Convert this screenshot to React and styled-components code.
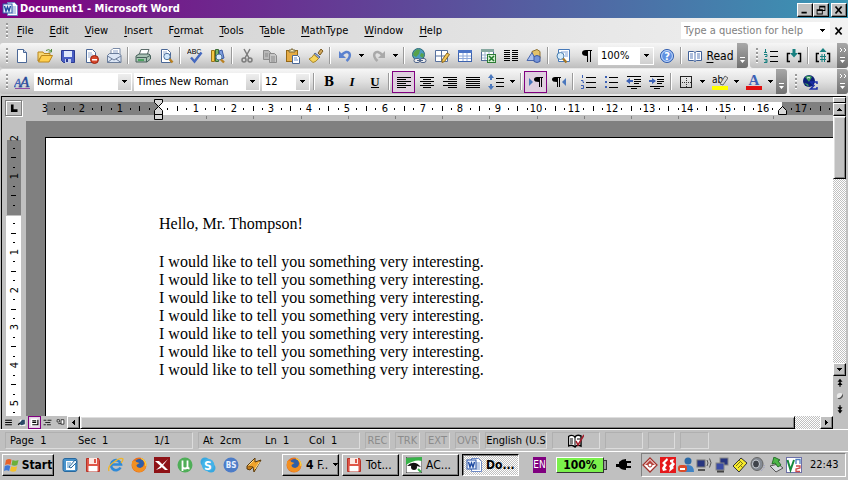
import React from 'react';
import styled, { createGlobalStyle } from 'styled-components';

const GlobalStyle = createGlobalStyle`
    * {
        box-sizing: border-box;
    }

    body {
        margin: 0;
        background: #c0c0c0;
        color: #000;
        font-family: 'DejaVu Sans Condensed', 'DejaVu Sans', sans-serif;
        font-size: 11px;
    }

    button, input, select {
        font: inherit;
        color: inherit;
        margin: 0;
        padding: 0;
        border: 0;
        border-radius: 0;
        background: none;
    }

    u {
        text-underline-offset: 2px;
    }
`

const Window = styled.div`
    display: flex;
    flex-direction: column;
    min-height: 100vh;
    overflow: hidden;
`

/* ---------- title bar ---------- */

const TitleBar = styled.header`
    display: flex;
    align-items: center;
    height: 18px;
    padding: 0 1px 0 2px;
    gap: 2px;
    background: linear-gradient(90deg, #800080 0%, #3a96b4 100%);
`

const Title = styled.h1`
    flex: 1;
    margin: 0;
    color: #fff;
    font-size: 11px;
    line-height: 18px;
    font-weight: bold;
    white-space: nowrap;
`

const CaptionButtons = styled.div`
    display: flex;
    margin-top: 1px;
`

const CaptionButton = styled.button`
    display: flex;
    align-items: center;
    justify-content: center;
    width: 16px;
    height: 14px;
    margin-left: ${p => (p.$apart ? '2px' : '0')};
    background: #c0c0c0;
    border: 1px solid;
    border-color: #fff #000 #000 #fff;
    box-shadow: inset -1px -1px #808080;
`

/* ---------- menus and toolbars ---------- */

const Docks = styled.div`
    display: flex;
    flex-direction: column;
    height: 78px;
    background: linear-gradient(90deg, #cecece 0%, #f2f2f2 100%);
`

const MenuBar = styled.nav`
    display: flex;
    align-items: center;
    height: 25px;
    padding-left: 6px;
`

const MenuItem = styled.button`
    height: 20px;
    padding: 0 8px;
    white-space: nowrap;
`

const Spacer = styled.div`
    flex: 1;
`

const AskBox = styled.label`
    display: flex;
    align-items: center;
    width: 149px;
    height: 17px;
    padding-right: 4px;
    background: #fff;
`

const AskInput = styled.input`
    flex: 1;
    min-width: 0;
    padding-left: 3px;
    outline: 0;

    &::placeholder {
        color: #808080;
        opacity: 1;
    }
`

const MenuClose = styled.button`
    display: flex;
    align-items: center;
    justify-content: center;
    width: 18px;
    height: 18px;
`

const ToolRow = styled.div`
    display: flex;
    height: 26px;
    gap: 2px;
`

const Strip = styled.div`
    display: flex;
    align-items: center;
    flex: ${p => (p.$grow ? '1' : 'none')};
    height: 25px;
    padding-left: 6px;
    border-radius: 3px;
    background: linear-gradient(180deg, #f6f6f6 0%, #e0e0e0 50%, #bebebe 100%);
`

const Grip = styled.i`
    width: 2px;
    height: 16px;
    margin-right: ${p => (p.$tight ? '1px' : '2px')};
    background: repeating-linear-gradient(180deg, #999 0 2px, #fff 2px 3px, transparent 3px 4px);
`

const Tool = styled.button`
    display: flex;
    align-items: center;
    justify-content: center;
    gap: 3px;
    flex: none;
    width: ${p => (p.$wide ? '53px' : '23px')};
    height: 22px;
    font-size: ${p => (p.$wide ? '12px' : 'inherit')};
    border: 1px solid ${p => (p.$on ? '#800080' : 'transparent')};
    background: ${p => (p.$on ? '#dfcfdf' : 'none')};
`

const DropButton = styled.button`
    display: flex;
    align-items: center;
    justify-content: center;
    flex: none;
    width: 11px;
    height: 22px;
`

const Divider = styled.i`
    flex: none;
    width: 2px;
    height: 17px;
    margin: 0 2px;
    border-left: 1px solid #9a9a9a;
    border-right: 1px solid #fff;
`

const Combo = styled.label`
    display: flex;
    align-items: center;
    flex: none;
    width: ${p => p.$width}px;
    height: 18px;
    margin: 0 1px;
    background: #fff;
`

const ComboSelect = styled.select`
    appearance: none;
    flex: 1;
    min-width: 0;
    height: 18px;
    padding-left: 3px;
    outline: 0;
`

const ComboArrow = styled.span`
    display: flex;
    align-items: center;
    justify-content: center;
    width: 13px;
    height: 16px;
    margin-right: 1px;
    background: linear-gradient(180deg, #eee, #cfcfcf);
`

const Overflow = styled.button`
    display: flex;
    flex-direction: column;
    align-items: center;
    justify-content: ${p => (p.$more ? 'space-between' : 'flex-end')};
    width: 11px;
    height: 25px;
    padding: 5px 0 4px;
    margin-left: ${p => (p.$push ? 'auto' : '0')};
    border-radius: 0 3px 3px 0;
    background: linear-gradient(180deg, #a8a8a8, #707070);
`

/* ---------- workspace ---------- */

const Workspace = styled.main`
    display: flex;
    flex: 1;
    margin: 0 2px 0 1px;
    border-top: 1px solid #000;
    border-left: 1px solid #000;
    background: #c0c0c0;
`

const Editor = styled.section`
    display: flex;
    flex-direction: column;
    flex: 1;
    min-width: 0;
`

const RulerRow = styled.div`
    display: flex;
    height: 24px;
`

const TabSelector = styled.button`
    display: flex;
    align-items: center;
    justify-content: center;
    flex: none;
    width: 17px;
    height: 16px;
    margin: 3px 12px 0 3px;
    border: 1px solid #808080;
    box-shadow: inset 1px 1px #fff, 1px 1px #fff;
`

const HorizontalScale = styled.svg`
    flex: 1;
    min-width: 0;
    height: 24px;
`

const EditorBody = styled.div`
    display: flex;
    flex: 1;
    min-height: 295px;
`

const VerticalScale = styled.svg`
    flex: none;
    width: 24px;
    height: 295px;
`

const Canvas = styled.div`
    display: flex;
    flex: 1;
    min-width: 0;
    padding: 16px 0 0 19px;
    background: #808080;
`

const Page = styled.article`
    flex: 1;
    min-width: 0;
    padding: 77px 20px 0 113px;
    border-top: 1px solid #000;
    border-left: 1px solid #000;
    background: #fff;
    font-family: 'Liberation Serif', serif;
    font-size: 16px;
    line-height: 18px;
`

const Paragraph = styled.p`
    margin: 0;

    &:empty {
        height: 20px;
    }
`

const checker = 'repeating-conic-gradient(#c0c0c0 0 25%, #fff 0 50%) 0 0 / 2px 2px'

const ViewBar = styled.div`
    display: flex;
    align-items: center;
    height: 13px;
`

const ViewButton = styled.button`
    display: flex;
    align-items: center;
    justify-content: center;
    width: 13px;
    height: 13px;
    border: 1px solid ${p => (p.$on ? '#800080' : 'transparent')};
    background: ${p => (p.$on ? '#e3cfe3' : 'none')};
`

const ScrollButton = styled.button`
    display: flex;
    align-items: center;
    justify-content: center;
    flex: none;
    width: 13px;
    height: 13px;
    background: #c0c0c0;
    border: 1px solid;
    border-color: #fff #000 #000 #fff;
    box-shadow: inset -1px -1px #808080;
`

const HorizontalTrack = styled.div`
    flex: 1;
    height: 13px;
    padding-right: 25px;
    background: ${checker};
`

const Thumb = styled.div`
    height: ${p => p.$height || 13}px;
    background: #c0c0c0;
    border: 1px solid;
    border-color: #fff #000 #000 #fff;
    box-shadow: inset 1px 1px #dedede, inset -1px -1px #808080;
`

const ScrollColumn = styled.aside`
    display: flex;
    flex-direction: column;
    flex: none;
    width: 13px;
`

const SplitBox = styled.div`
    height: 6px;
    border: 1px solid;
    border-color: #fff #000 #000 #fff;
`

const VerticalTrack = styled.div`
    flex: 1;
    background: ${checker};
`

const BrowseButtons = styled.div`
    display: flex;
    flex-direction: column;
    height: 53px;
`

/* ---------- status bar ---------- */

const StatusBar = styled.footer`
    display: flex;
    align-items: center;
    gap: 5px;
    height: 22px;
    padding: 0 5px;
    border-top: 1px solid #fff;
    white-space: nowrap;
`

const StatusGroup = styled.div`
    display: grid;
    grid-template-columns: ${p => p.$columns};
    align-items: center;
    flex: none;
    height: 17px;
    padding-left: ${p => (p.$flush ? '0' : '4px')};
    justify-items: ${p => (p.$flush ? 'center' : 'start')};
    color: ${p => (p.$dim ? '#8c8c8c' : '#000')};
    border: 1px solid;
    border-color: #b0b0b0 #dcdcdc #dcdcdc #b0b0b0;
`

/* ---------- task bar ---------- */

const TaskBar = styled.footer`
    display: flex;
    align-items: center;
    height: 29px;
    padding: 0 2px 3px;
    border-top: 1px solid #fff;
    white-space: nowrap;
`

const StartButton = styled.button`
    display: flex;
    align-items: center;
    justify-content: center;
    gap: 2px;
    width: 52px;
    height: 22px;
    font-size: 12px;
    font-weight: bold;
    border: 1px solid;
    border-color: #fff #000 #000 #fff;
    box-shadow: inset -1px -1px #808080;
`

const QuickLaunch = styled.div`
    display: flex;
    margin: 0 17px 0 4px;
`

const LaunchButton = styled.button`
    display: flex;
    align-items: center;
    justify-content: center;
    width: 23px;
    height: 22px;
`

const Tasks = styled.div`
    display: flex;
    gap: 3px;
`

const Task = styled.button`
    display: flex;
    align-items: center;
    gap: 4px;
    width: 57px;
    height: 22px;
    padding-left: 3px;
    overflow: hidden;
    font-size: 12px;
    font-weight: ${p => (p.$active ? 'bold' : 'normal')};
    background: ${p => (p.$active ? checker : '#c0c0c0')};
    border: 1px solid;
    border-color: ${p => (p.$active ? '#000 #fff #fff #000' : '#fff #000 #000 #fff')};
    box-shadow: ${p => (p.$active ? 'inset 1px 1px #808080' : 'inset -1px -1px #808080')};
`

const Language = styled.button`
    width: 13px;
    height: 16px;
    margin: 0 10px 0 14px;
    background: #800080;
    color: #fff;
    font-size: 10px;
    line-height: 16px;
`

const Battery = styled.div`
    width: 48px;
    height: 16px;
    border: 1px solid;
    border-color: #fff #333 #333 #fff;
    background: #7bf04c;
    font-size: 12px;
    font-weight: bold;
    line-height: 14px;
    text-align: center;
`

const BatteryTip = styled.i`
    width: 3px;
    height: 10px;
    border: 1px solid #333;
    border-left: 0;
    background: #999;
`

const Plug = styled.div`
    display: flex;
    margin-left: 9px;
`

const Tray = styled.div`
    display: flex;
    align-items: center;
    width: 205px;
    height: 24px;
    margin-left: auto;
    border: 1px solid;
    border-color: #808080 #fff #fff #808080;
`

const TrayIcons = styled.div`
    display: flex;
    gap: 2px;
`

const Clock = styled.time`
    margin-left: 8px;
`

const Svg = styled.svg`
    flex: none;
    display: block;
`

/* ---------- icons, all on a 16px grid ---------- */

const sheet = (
    <path d="M3.5 1.5h6l3 3v10h-9z" fill="#fff" stroke="#4a6796" />
)

const bars = (rows, color = '#000') => rows.map(([x, y, w]) => (
    <rect key={`${x}-${y}`} x={x} y={y} width={w} height="1" fill={color} />
))

const icons = {
    word: <>
        <path d="M5.500 1.500h7l3 3v10h-10z" fill="#fff" stroke="#6d88c4" />
        <path d="M10 6h4M10 8h4M10 10h4M10 12h4" stroke="#7d9ad0" />
        <rect x="1" y="3" width="9" height="9" fill="#e8effc" stroke="#2c56a8" />
        <path d="M2.500 5l1.500 5 1.500-4 1.500 4 1.500-5" fill="none" stroke="#1f4aa0" strokeWidth="1.400" />
    </>,
    min: <rect x="4" y="10" width="6" height="2" />,
    restore: <path d="M6 3h7v6h-3v4H3V7h3zM7 5v2h3v1h2V5zM4 9v3h5V9z" fillRule="evenodd" />,
    close: <path d="M4 4l7 8M11 4l-7 8" stroke="#000" strokeWidth="2" />,
    fresh: <>
        {sheet}
        <path d="M9.500 1.500v3h3" fill="#c9d8f0" stroke="#4a6796" />
    </>,
    open: <>
        <path d="M1 4h5l1 1.500h6v3H4L1 13z" fill="#f7d774" stroke="#b9861c" />
        <path d="M1.500 14L4.500 7.500h11L12 14z" fill="#ffcf4e" stroke="#b9861c" />
        <path d="M9 2.500q3-2 5 .5M14.500 1v3h-3" fill="none" stroke="#4f8a3c" />
    </>,
    save: <>
        <path d="M1.500 2.500h13v12h-11l-2-2z" fill="#4a5fc4" stroke="#2b3a91" />
        <rect x="4" y="3" width="8" height="6" fill="#dfe8fb" />
        <rect x="5" y="11" width="6" height="4" fill="#c5cfee" />
        <rect x="6" y="11" width="2" height="3" fill="#2b3a91" />
    </>,
    permission: <>
        {sheet}
        <path d="M5 5h4M5 7h5M5 9h3" stroke="#9bb0d4" />
        <circle cx="11.500" cy="11.500" r="4" fill="#d8472b" stroke="#962512" />
        <rect x="9" y="11" width="5" height="1.500" fill="#fff" />
    </>,
    mail: <>
        <path d="M5 8V2.500L7 .500h7v9" fill="#fff" stroke="#7a8ba8" />
        <path d="M7 3h5M7 5h5" stroke="#8ca2c8" />
        <path d="M1.500 7.500l2-2H13l2 2v7h-13.500z" fill="#dce6f5" stroke="#6a7c9a" />
        <path d="M1.500 8l6.500 4 7-4M1.500 14.500L6 11M15 14.500L10 11" fill="none" stroke="#6a7c9a" />
    </>,
    print: <>
        <path d="M4 7l2-5.500h8L12 7z" fill="#fff" stroke="#5c6b6a" />
        <path d="M1 8l3-2h10l1.500 1.500V11L12 14H1z" fill="#a9c1b4" stroke="#46605a" />
        <path d="M1.500 9.500h10l3.500-2M11.500 9.500V14" fill="none" stroke="#46605a" />
        <path d="M3 12h6" stroke="#2f9b46" strokeWidth="1.500" />
    </>,
    preview: <>
        {sheet}
        <path d="M5 4h4M5 6h2" stroke="#9bb0d4" />
        <circle cx="9" cy="8.500" r="3.200" fill="#cfe6fb" stroke="#50729c" />
        <path d="M11.500 11l3 3.500" stroke="#b98022" strokeWidth="2.500" />
    </>,
    spelling: <>
        <text x="0" y="6" fontSize="7" fontFamily="Liberation Sans, sans-serif">ABC</text>
        <path d="M4 9.500l3.500 4L14.500 4.500" fill="none" stroke="#4569bf" strokeWidth="2.400" />
    </>,
    research: <>
        <path d="M1.500 2.500h3v11h-3z" fill="#f3c745" stroke="#9b741a" />
        <path d="M5.500 1.500h3v12h-3z" fill="#7db56b" stroke="#3a6b34" />
        <path d="M9 3l3-1 2 8-3 1z" fill="#7f9fe0" stroke="#3a58a4" />
        <circle cx="9" cy="9" r="3" fill="#d9edff" stroke="#50729c" />
        <path d="M11 11.500l3 3" stroke="#b98022" strokeWidth="2.400" />
    </>,
    cut: <>
        <path d="M5 1l5 9M11 1L6 10" stroke="#7c7c7c" strokeWidth="1.500" />
        <circle cx="5" cy="12" r="2" fill="none" stroke="#7c7c7c" strokeWidth="1.500" />
        <circle cx="11" cy="12" r="2" fill="none" stroke="#7c7c7c" strokeWidth="1.500" />
    </>,
    copy: <>
        <path d="M1.500 2.500h5l2 2v7h-7z" fill="#b8b8b8" stroke="#8b8b8b" />
        <path d="M7.500 5.500h5l2 2v7h-7z" fill="#c6c6c6" stroke="#8b8b8b" />
        <path d="M9 9h4M9 11h4M9 13h4M3 6h3M3 8h3" stroke="#8b8b8b" />
    </>,
    paste: <>
        <rect x="1.500" y="2.500" width="11" height="11" fill="#e5ab45" stroke="#956816" />
        <path d="M4 4V2h2l1-1.500L8 2h2v2z" fill="#f3e7b9" stroke="#7b6a3a" />
        <path d="M7.500 7.500h5l2 2v6h-7z" fill="#fff" stroke="#4a6796" />
        <path d="M9 10h3M9 12h4" stroke="#6a8ed0" />
    </>,
    brush: <>
        <path d="M10 5l3-4 2 2-3 4z" fill="#d2a85c" stroke="#7d5c20" />
        <path d="M7 5l5 4-1.500 1.500L6 6.500z" fill="#8fa6d0" stroke="#4f6798" />
        <path d="M6 6.500l4.500 4Q8 14 5 14.500L1 11Q4 10 6 6.500z" fill="#f6d45c" stroke="#a98525" />
    </>,
    undo: <>
        <path d="M4 7.500Q10 1.500 12.500 5.500 14 9 9.500 13" fill="none" stroke="#5b82cf" strokeWidth="2.500" />
        <path d="M2 3v7h7z" fill="#5b82cf" />
    </>,
    redo: <>
        <path d="M12 7.500Q6 1.500 3.500 5.500 2 9 6.500 13" fill="none" stroke="#a9a9a9" strokeWidth="2.500" />
        <path d="M14 3v7H7z" fill="#a9a9a9" />
    </>,
    link: <>
        <circle cx="7.500" cy="6.500" r="6" fill="#4c9bbf" stroke="#2c6a78" />
        <path d="M3 4q3-4 6-2l-1 4-3 3-3-2zM10 5l3 1-1 4-3-2z" fill="#57a24b" />
        <rect x="3" y="10.500" width="6" height="4" rx="2" fill="#eee" stroke="#50658c" />
        <rect x="9" y="10.500" width="6" height="4" rx="2" fill="#eee" stroke="#50658c" />
        <path d="M6 12.500h6" stroke="#50658c" />
    </>,
    borders: <>
        <path d="M1.500 2.500h12v11h-12zM1.500 8h12M7.500 2.500v11" fill="#fff" stroke="#56709e" />
        <path d="M8 12l5-7 2.500 1.500-5 7L8 14.500z" fill="#f1c75a" stroke="#8d6619" />
    </>,
    table: <>
        <rect x="1.500" y="2.500" width="13" height="11" fill="#fff" stroke="#3c62ae" />
        <rect x="1" y="2" width="14" height="3" fill="#4b74c6" />
        <path d="M2 8h12M2 10.500h12M6 5v8M10 5v8" stroke="#8faada" />
    </>,
    excel: <>
        <rect x="1.500" y="1.500" width="12" height="11" fill="#fff" stroke="#55709b" />
        <rect x="1" y="1" width="13" height="3" fill="#86a8a0" />
        <path d="M2 7h11M2 10h11M5 4v8M9 4v8" stroke="#9db2cd" />
        <rect x="7.500" y="6.500" width="8" height="8" fill="#d8f0d4" stroke="#2d7b34" />
        <path d="M9 8l5 5M14 8l-5 5" stroke="#1f7a2b" strokeWidth="1.600" />
    </>,
    columns: bars([2, 4, 6, 8, 10, 12].flatMap(y => [[1, y, 6], [9, y, 6]])),
    drawing: <>
        <path d="M6 3.500l5-2 3 2v7l-5 2-3-2z" fill="#e4c26a" stroke="#8d7030" />
        <path d="M1 12.500l5-8 4 8z" fill="#a9c0ef" stroke="#4967ac" />
        <path d="M8 8.500q3-2 6 0v5q-3 2-6 0z" fill="#7594d8" stroke="#3a58a4" />
    </>,
    docmap: <>
        <path d="M3.500 1.500h11v12h-11z" fill="#fff" stroke="#4679b9" />
        <path d="M6 4h7M10 6h3M10 8h3" stroke="#7ca0d8" />
        <circle cx="5.500" cy="8" r="3.500" fill="#d5ebfb" stroke="#487dae" />
        <path d="M8 10.500l3.500 4" stroke="#a87724" strokeWidth="2.400" />
    </>,
    pilcrow: <>
        <path d="M8 2h6v1h-1v11h-1V3h-2v11H9V8Q4 8 4 5t4-3z" />
    </>,
    help: <>
        <circle cx="8" cy="8" r="6.500" fill="#5f90e2" stroke="#2f5cae" />
        <circle cx="8" cy="8" r="5.400" fill="none" stroke="#c7dbfa" />
        <text x="8" y="12" fontSize="11" fontWeight="bold" fill="#fff" textAnchor="middle">?</text>
    </>,
    book: <>
        <path d="M1.500 3.500h5l1.500 1 1.500-1h5v9h-5l-1.500 1-1.500-1h-5z" fill="#fff" stroke="#3f5f97" />
        <path d="M8 4.500v9M3 6h3M3 8h3M3 10h3M10 6h3M10 8h3M10 10h3" stroke="#5b7cb8" />
    </>,
    outline: <>
        {bars([[7, 3, 8], [7, 8, 8], [7, 13, 8]])}
        <path d="M2.500 1v3M1 4.500h3M1 6.500h3v2H2M1 11.500h3v3H1M2 13h2" fill="none" stroke="#178080" />
    </>,
    insertRef: <>
        <path d="M4 5.500H1.500v8H4M12 5.500h2.500v8H12" fill="none" stroke="#000" strokeWidth="1.500" />
        <path d="M6.500 1h3v4h2.500L8 9.500 4 5h2.500z" fill="#178080" />
    </>,
    numberRef: <>
        <path d="M4 5.500H1.500v8H4M12 5.500h2.500v8H12" fill="none" stroke="#000" strokeWidth="1.500" />
        <path d="M8 0l3.500 4h-7z" fill="#178080" />
        <path d="M7 6v8M9.500 6v8M5 8.500h6M5 11.500h6" stroke="#178080" />
    </>,
    styles: <>
        <text x="0" y="13" fontSize="12" fontStyle="italic" fontFamily="Liberation Serif, serif" fill="#3c61b5" stroke="#3c61b5" strokeWidth=".4">A</text>
        <text x="6" y="13" fontSize="15" fontStyle="italic" fontFamily="Liberation Serif, serif" fill="#274a99" stroke="#274a99" strokeWidth=".4">A</text>
        <path d="M1 14.500h15" stroke="#8e4fa5" />
    </>,
    bold: <text x="8" y="12" fontSize="12" fontWeight="bold" textAnchor="middle" fontFamily="DejaVu Serif, serif">B</text>,
    italic: <text x="8" y="12" fontSize="13" fontWeight="bold" fontStyle="italic" textAnchor="middle" fontFamily="Liberation Serif, serif">I</text>,
    underline: <>
        <text x="8" y="12" fontSize="13" fontWeight="bold" textAnchor="middle" fontFamily="Liberation Serif, serif">U</text>
        <path d="M4 13.500h8" stroke="#000" />
    </>,
    left: bars([[1, 3, 14], [1, 5, 9], [1, 7, 14], [1, 9, 9], [1, 11, 14], [1, 13, 9]]),
    center: bars([[1, 3, 14], [4, 5, 8], [1, 7, 14], [4, 9, 8], [1, 11, 14], [4, 13, 8]]),
    right: bars([[1, 3, 14], [6, 5, 9], [1, 7, 14], [6, 9, 9], [1, 11, 14], [6, 13, 9]]),
    justify: bars([[1, 3, 14], [1, 5, 14], [1, 7, 14], [1, 9, 14], [1, 11, 14], [1, 13, 14]]),
    spacing: <>
        {bars([[8, 4, 8], [8, 8, 8], [8, 12, 8]])}
        <path d="M3 0l3 4H4v2H2V4H0zM3 16l3-4H4v-2H2v2H0z" fill="#4b78bd" />
    </>,
    ltr: <>
        <path d="M1 4l4 4-4 4z" fill="#4b78bd" />
        <path d="M9 3h6v1h-1v9h-1V4h-1v9h-1V8Q6 8 6 5.500T9 3z" />
    </>,
    rtl: <>
        <path d="M15 4l-4 4 4 4z" fill="#4b78bd" />
        <path d="M4 3h6v1H9v9H8V4H7v9H6V8Q1 8 1 5.500T4 3z" />
    </>,
    numbers: <>
        {bars([[6, 3, 10], [6, 8, 10], [6, 13, 10]])}
        <path d="M2.500 1v3M1 6.500h2v2h1M1 11.500h2.500v3H1" fill="none" stroke="#3c61b5" />
    </>,
    bullets: <>
        {bars([[6, 3, 9], [6, 8, 9], [6, 13, 9]])}
        <path d="M2 2h2v2H2zM2 7h2v2H2zM2 12h2v2H2z" fill="#3c61b5" />
    </>,
    outdent: <>
        {bars([[1, 2, 14], [8, 5, 7], [8, 7, 7], [8, 9, 5], [1, 12, 14], [5, 14, 6]])}
        <path d="M0 7l4-3v2h3v2H4v2z" fill="#3c61b5" />
    </>,
    indent: <>
        {bars([[1, 2, 14], [8, 5, 7], [8, 7, 7], [8, 9, 5], [1, 12, 14], [5, 14, 6]])}
        <path d="M7 7L3 4v2H0v2h3v2z" fill="#3c61b5" />
    </>,
    frame: <>
        <rect x="2.500" y="2.500" width="11" height="11" fill="none" stroke="#222" />
        <path d="M8.500 4v9M4 8.500h9" stroke="#333" strokeDasharray="1 1" />
    </>,
    highlight: <>
        <text x="0" y="9" fontSize="10">ab</text>
        <path d="M8 10l5-8 3 2-5 7z" fill="#ddd" stroke="#666" />
        <rect x="0" y="12" width="16" height="4" fill="#ff0" />
    </>,
    fontColor: <>
        <text x="8" y="11" fontSize="15" fontWeight="bold" textAnchor="middle" fontFamily="Liberation Serif, serif" fill="#3c61b5">A</text>
        <rect x="0" y="12" width="16" height="4" fill="#e01010" />
    </>,
    equation: <>
        <circle cx="7" cy="7" r="6" fill="#0c1e78" />
        <path d="M3 3q4-3 7 0L7 8zM2 9l4 1 1 3z" fill="#3b9a5c" />
        <path d="M5 4q2-1 3 0" stroke="#fff" fill="none" />
        <path d="M15 10V8H8.500l3.500 3.500L8.500 15H15v-2" fill="none" stroke="#1c2da8" strokeWidth="1.500" />
    </>,
    tab: <path d="M6 4v7h6" fill="none" stroke="#000" strokeWidth="3" />,
    viewNormal: <path d="M2 4h12M2 8h12M2 12h12" stroke="#000" strokeWidth="2" />,
    viewWeb: <>
        <path d="M5 3h10v11H5z" fill="#fff" />
        <path d="M3 10l6-7h5v8l-6 2z" fill="#2b4a68" />
        <path d="M2 12l3-3" stroke="#000" strokeWidth="2" />
    </>,
    viewPrint: <>
        <rect x="1" y="1" width="14" height="14" fill="#fff" />
        <path d="M4 5h7M4 8h7M4 12h10M14 3v10" stroke="#000" strokeWidth="2" />
    </>,
    viewOutline: <path d="M1 4h5M8 4h7M4 8h9M1 12h4M7 12h7" stroke="#222" strokeWidth="2" />,
    viewReading: <path d="M2 3h4v4H2zM9 3h5v8H9zM4 10h5" fill="#fff" stroke="#222" strokeWidth="1.500" />,
    prevPage: <path d="M8 1l4 5H9v1l3 4H9v3H7v-3H4l3-4V6H4z" />,
    ball: <>
        <circle cx="8" cy="8" r="5" fill="#e8e8e8" />
        <path d="M12 4q3 7-4 9-3 0-4-2 6 1 8-7z" fill="#555" />
    </>,
    nextPage: <path d="M8 15l4-5H9V9l3-4H9V2H7v3H4l3 4v1H4z" />,
    proof: <>
        <path d="M.500 3.500Q4 1 7 4q2-3 6-1v10q-4-2-6 1-3-3-6.500-1z" fill="#fff" stroke="#000" strokeWidth="1.400" />
        <path d="M7 4v10M2 6h3M2 8h3M2 10h3M9 6h3" stroke="#000" />
        <path d="M8 8l2 4 6-10" fill="none" stroke="#a31e2c" strokeWidth="1.600" />
    </>,
    windows: <>
        <path d="M2 3q3-2 5.500-.300L6.500 8Q4 6.500 1 8z" fill="#e8622a" />
        <path d="M8.500 3q3 1.500 6 0l-1.200 5q-2.800 1.500-5.800 0z" fill="#6bb03c" />
        <path d="M.800 9q3-1.500 5.500 0l-1.200 5Q2.500 12.500 0 14z" fill="#3f78d8" />
        <path d="M7.300 9.200q3 1.400 5.800 0L12 14q-3 1.500-6 0z" fill="#f3c02c" />
    </>,
    desktop: <>
        <rect x="1" y="1.500" width="14" height="13" rx="2" fill="#4793cc" stroke="#28679d" />
        <rect x="4" y="4" width="9" height="9" fill="#fff" />
        <path d="M5 6h4M5 8h3M5 10h4" stroke="#4793cc" />
        <path d="M7 10l6-7 2 2-6 6z" fill="#e9f4fc" stroke="#28679d" />
    </>,
    floppy: <>
        <path d="M1.500 1.500h12l1 2v11h-13z" fill="#df5648" stroke="#b63328" />
        <rect x="4" y="1" width="8" height="6" fill="#fbe9e4" />
        <rect x="3.500" y="9" width="9" height="5.500" fill="#fff" />
        <rect x="9" y="2" width="2" height="4" fill="#df5648" />
    </>,
    explorer: <>
        <path d="M12.500 10.500A5 5 0 1 1 13 7.500H4" fill="none" stroke="#2f8ad8" strokeWidth="2.600" />
        <path d="M1 14Q-1 10 6 5T15 2q0 2-2 4" fill="none" stroke="#efb52c" strokeWidth="1.400" />
    </>,
    firefox: <>
        <circle cx="8" cy="8" r="7.500" fill="#e7701d" />
        <circle cx="8.500" cy="6.500" r="4.500" fill="#2f5fa8" />
        <path d="M1 4q3-1 4.500 1l3 1-3 2q0 3 4 3 4-1 4.500-6Q17.500 12 10 15 2 15 1 9z" fill="#f29022" />
        <path d="M10 1.500q5 2 5 7.500" fill="none" stroke="#ffd33d" strokeWidth="1.300" />
    </>,
    crossApp: <>
        <rect width="16" height="16" fill="#8e1216" />
        <path d="M1 4h4l9 9h-3z" fill="#fff" />
        <path d="M14 2L2 13l5-2z" fill="#fff" />
    </>,
    torrent: <>
        <circle cx="8" cy="8" r="7.500" fill="#4fae58" />
        <path d="M5.500 3.500v6q0 2 2.500 2t2.500-2v-6M10.500 9.500q0 2 2 2M5.500 9v5" fill="none" stroke="#fff" strokeWidth="1.800" />
    </>,
    skype: <>
        <circle cx="5" cy="5" r="4.500" fill="#38a8e0" />
        <circle cx="11" cy="11" r="4.500" fill="#38a8e0" />
        <circle cx="8" cy="8" r="6.200" fill="#42b2e8" />
        <text x="8" y="12.500" fontSize="12" fontWeight="bold" fill="#fff" textAnchor="middle">S</text>
    </>,
    bs: <>
        <circle cx="8" cy="8" r="7.500" fill="#4c7cc7" />
        <text x="8" y="11" fontSize="8" fontWeight="bold" fill="#e8f0ff" textAnchor="middle">BS</text>
    </>,
    winamp: <>
        <path d="M1 9l8-8v4l6-2-7 12-1-5z" fill="#f0a42c" stroke="#5b3b0c" />
        <path d="M2.500 8.500l5-5M9 12l4.500-7" stroke="#fbe29b" />
        <path d="M1 9v3l3 1 3-3" fill="#c37a18" stroke="#5b3b0c" />
    </>,
    eye: <>
        <rect width="16" height="16" fill="#fff" stroke="#222" />
        <path d="M0 1l16-1v4Q9 2 0 8z" fill="#37b248" />
        <path d="M1 9q7-7 14 1Q8 8 1 9z" fill="#111" />
        <circle cx="8" cy="10" r="3" fill="#111" />
        <path d="M12 12l3 3" stroke="#37b248" strokeWidth="2" />
    </>,
    plug: <path d="M0 7h3V5q3-3 7-3v2h5v2h-4v3h4v2h-5v2Q5 13 3 10H0z" />,
    diamond: <>
        <path d="M8 1l7 7-7 7-7-7z" fill="#fff" stroke="#a3332d" strokeWidth="1.300" />
        <path d="M8 3l5 5H3z" fill="#c24a42" />
        <circle cx="8" cy="8" r="2" fill="#fff" stroke="#a3332d" />
    </>,
    bolt: <>
        <rect width="16" height="16" fill="#e5181b" />
        <path d="M7 1L2 6l2 2-2 3 1 3 4-1-2-2 2-3-2-2 3-3zM10 3l4-1-1 3 2 2-2 3 1 1-5 4 1-4-1-2 3-3-2-1z" fill="#fff" />
    </>,
    userBusy: <>
        <circle cx="10" cy="4" r="3.500" fill="#2c6aa6" />
        <path d="M3 15q1-7 7-7t6 7z" fill="#3f83c4" />
        <rect x="0" y="8" width="9" height="7" rx="3" fill="#dc4a28" />
        <rect x="2" y="11" width="5" height="2" fill="#fff" />
    </>,
    wireless: <>
        <rect x="1" y="3" width="8" height="7" fill="#27357f" stroke="#777" />
        <path d="M2 13h7" stroke="#555" strokeWidth="2" />
        <path d="M11 3q2 3 0 6M13.500 1.500q3 4 0 9" fill="none" stroke="#555" />
    </>,
    network: <>
        <rect x="6" y="1" width="8" height="7" fill="#27357f" stroke="#888" />
        <rect x="2" y="6" width="8" height="7" fill="#3b4ca5" stroke="#888" />
        <path d="M3 14.500h7" stroke="#444" strokeWidth="2" />
    </>,
    note: <>
        <path d="M1 9l8-8 6 5-8 9z" fill="#f5e92c" stroke="#333" />
        <path d="M4 9l5-5M6 11l5-5M8 8l3 3M7 3l3 3" stroke="#77701a" />
    </>,
    speaker: <>
        <ellipse cx="7" cy="7" rx="6" ry="6.500" fill="#858b94" stroke="#666" />
        <ellipse cx="6" cy="7" rx="3.500" ry="4" fill="#3f434a" stroke="#c8ccd2" />
        <path d="M14 8q1 4-4 6" fill="none" stroke="#8f93c0" strokeDasharray="1 1" />
    </>,
    remove: <>
        <path d="M2 9l8-2 5 4-7 4z" fill="#d8dbe0" stroke="#555" />
        <path d="M6 0l6 3-2 1 3 4-3 2-3-4-3 1z" fill="#4cb648" stroke="#27702a" />
    </>,
    vnc: <>
        <rect x=".500" y=".500" width="15" height="15" fill="#fff" stroke="#6d70a8" />
        <path d="M1.500 3L4.500 13 8 3" fill="none" stroke="#178a3c" strokeWidth="2" />
        <path d="M10 7V2.500h4V7" fill="none" stroke="#4f7fc0" strokeWidth="1.300" />
        <path d="M10 9h4v2l-4 1v2.500h4" fill="none" stroke="#cf4b4b" strokeWidth="1.300" />
    </>,
}

const Icon = ({ name, size = 16 }) => (
    <Svg width={size} height={size} viewBox="0 0 16 16" aria-hidden="true">{icons[name]}</Svg>
)

const turns = { down: 0, left: 90, up: 180, right: 270 }

const Arrow = ({ to = 'down' }) => (
    <Svg width="7" height="7" viewBox="0 0 7 7" shapeRendering="crispEdges" aria-hidden="true">
        <path d="M1 2h5v1H5v1H4v1H3V4H2V3H1z" transform={`rotate(${turns[to]} 3.5 3.5)`} />
    </Svg>
)

const Chevrons = () => (
    <Svg width="8" height="5" viewBox="0 0 8 5" aria-hidden="true">
        <path d="M1 0l2 2-2 2M5 0l2 2-2 2" fill="none" stroke="#fff" />
    </Svg>
)

const OverflowMark = () => (
    <Svg width="7" height="7" viewBox="0 0 7 7" aria-hidden="true">
        <path d="M1 0h5v1H1zM1 3h5L3.500 6z" fill="#fff" />
    </Svg>
)

const MoreButton = ({ more, push }) => (
    <Overflow $more={more} $push={push} aria-label="Toolbar options">
        {more && <Chevrons />}
        <OverflowMark />
    </Overflow>
)

const standardTools = [
    'fresh', 'open', 'save', 'permission', 'mail', '|', 'print', 'preview', '|', 'spelling', 'research', '|',
    'cut', 'copy', 'paste', 'brush', '|', 'undo', 'v', 'redo', 'v', '|',
    'link', 'borders', 'table', 'excel', 'columns', 'drawing', '|', 'docmap', 'pilcrow',
]

const formatTools = [
    '|', 'bold', 'italic', 'underline', '|', 'left', 'center', 'right', 'justify', 'spacing', 'v', '|',
    'ltr', 'rtl', '|', 'numbers', 'bullets', 'outdent', 'indent', '|',
    'frame', 'v', 'highlight', 'v', 'fontColor', 'v',
]

const pressed = ['left', 'ltr']

const ToolList = ({ items }) => items.map((name, i) => {
    if (name === '|') return <Divider key={i} />
    if (name === 'v') return <DropButton key={i} aria-label="More"><Arrow /></DropButton>
    return <Tool key={i} $on={pressed.includes(name)} aria-label={name}><Icon name={name} /></Tool>
})

const Picker = ({ label, value, width }) => (
    <Combo $width={width}>
        <ComboSelect aria-label={label} defaultValue={value}>
            <option>{value}</option>
        </ComboSelect>
        <ComboArrow><Arrow /></ComboArrow>
    </Combo>
)

const menus = ['File', 'Edit', 'View', 'Insert', 'Format', 'Tools', 'Table', 'MathType', 'Window', 'Help']
const hotkeys = { Format: 1, Table: 1 }

const Menu = ({ name }) => {
    const at = hotkeys[name] || 0
    return <MenuItem>{name.slice(0, at)}<u>{name[at]}</u>{name.slice(at + 1)}</MenuItem>
}

// one centimetre on the rulers at 100% zoom
const CM = 37.8

// where zero sits on each ruler
const H_ZERO = 124
const V_ZERO = 93

const range = (from, to) => {
    const list = []
    for (let n = from; n <= to; n++) list.push(n)
    return list
}

const HRuler = () => (
    <HorizontalScale fontSize="11" textAnchor="middle" aria-label="Horizontal ruler">
        <rect x={H_ZERO - 111} y="5" width="112" height="13" fill="#808080" />
        <rect x={H_ZERO} y="5" width="624" height="13" fill="#fff" />
        <rect x={H_ZERO + 624} y="5" width="100%" height="13" fill="#808080" />
        {range(-12, 71).filter(q => q !== 0).map(q => {
            const x = Math.round(H_ZERO + q * CM / 4)
            if (q % 4 === 0) return <text key={q} x={x} y="15">{Math.abs(q / 4)}</text>
            if (q % 2 === 0) return <rect key={q} x={x} y="9" width="1" height="5" />
            return <rect key={q} x={x} y="11" width="1" height="2" />
        })}
        {range(1, 13).map(n => (
            <rect key={n} x={Math.round(H_ZERO + 1 + n * 47.2)} y="19" width="1" height="3" fill="#808080" />
        ))}
        <g transform={`translate(${H_ZERO} 0)`} fill="#d8d8d8" stroke="#000">
            <path d="M-3.500 2.500h8v3l-4 4-4-4zM-3.500 17.500v-4l4-4 4 4v4zM-3.500 17.500h8v5h-8z" />
            <path d="M620.500 17.500v-4l4-4 4 4v4z" />
        </g>
    </HorizontalScale>
)

const VRuler = () => (
    <VerticalScale fontSize="11" textAnchor="middle" aria-label="Vertical ruler">
        <rect x="5" y="19" width="14" height="75" fill="#808080" />
        <rect x="4" y="95" width="15" height="200" fill="#fff" />
        {range(-8, 21).filter(q => q !== 0).map(q => {
            const y = Math.round(V_ZERO + q * CM / 4)
            if (q % 4 === 0) {
                return <text key={q} x="0" y="0" transform={`translate(16 ${y}) rotate(-90)`}>{Math.abs(q / 4)}</text>
            }
            if (q % 2 === 0) return <rect key={q} x="9" y={y} width="5" height="1" />
            return <rect key={q} x="11" y={y} width="2" height="1" />
        })}
    </VerticalScale>
)

const line = 'I would like to tell you something very interesting.'
const letter = ['Hello, Mr. Thompson!', '', line, line, line, line, line, line, line]

const launchers = ['desktop', 'floppy', 'explorer', 'firefox', 'crossApp', 'torrent', 'skype', 'bs', 'winamp']
const trayIcons = ['diamond', 'bolt', 'userBusy', 'wireless', 'network', 'note', 'speaker', 'remove', 'vnc']
const views = ['viewNormal', 'viewWeb', 'viewPrint', 'viewOutline', 'viewReading']

const App = () => (
    <>
        <GlobalStyle />
        <Window>
            <TitleBar>
                <Icon name="word" />
                <Title>Document1 - Microsoft Word</Title>
                <CaptionButtons>
                    <CaptionButton aria-label="Minimize"><Icon name="min" size={14} /></CaptionButton>
                    <CaptionButton aria-label="Restore"><Icon name="restore" size={14} /></CaptionButton>
                    <CaptionButton $apart aria-label="Close"><Icon name="close" size={14} /></CaptionButton>
                </CaptionButtons>
            </TitleBar>

            <Docks>
                <MenuBar>
                    <Grip $tight />
                    {menus.map(name => <Menu key={name} name={name} />)}
                    <Spacer />
                    <AskBox>
                        <AskInput placeholder="Type a question for help" aria-label="Ask a question" />
                        <Arrow />
                    </AskBox>
                    <MenuClose aria-label="Close document"><Icon name="close" size={14} /></MenuClose>
                </MenuBar>

                <ToolRow>
                    <Strip>
                        <Grip />
                        <ToolList items={standardTools} />
                        <Picker label="Zoom" value="100%" width={56} />
                        <Tool aria-label="Help"><Icon name="help" /></Tool>
                        <Divider />
                        <Tool $wide><Icon name="book" /><span><u>R</u>ead</span></Tool>
                        <MoreButton />
                    </Strip>
                    <Strip $grow>
                        <Grip $tight />
                        <ToolList items={['outline', 'insertRef', '|', 'numberRef']} />
                        <MoreButton more push />
                    </Strip>
                </ToolRow>

                <ToolRow>
                    <Strip>
                        <Grip />
                        <Tool aria-label="Styles"><Icon name="styles" /></Tool>
                        <Picker label="Style" value="Normal" width={98} />
                        <Picker label="Font" value="Times New Roman" width={126} />
                        <Picker label="Font size" value="12" width={48} />
                        <ToolList items={formatTools} />
                        <MoreButton />
                    </Strip>
                    <Strip $grow>
                        <Grip $tight />
                        <ToolList items={['equation']} />
                        <MoreButton more push />
                    </Strip>
                </ToolRow>
            </Docks>

            <Workspace>
                <Editor>
                    <RulerRow>
                        <TabSelector aria-label="Tab type"><Icon name="tab" size={14} /></TabSelector>
                        <HRuler />
                    </RulerRow>
                    <EditorBody>
                        <VRuler />
                        <Canvas>
                            <Page>
                                {letter.map((text, i) => <Paragraph key={i}>{text}</Paragraph>)}
                            </Page>
                        </Canvas>
                    </EditorBody>
                    <ViewBar>
                        {views.map(name => (
                            <ViewButton key={name} $on={name === 'viewPrint'} aria-label={name}>
                                <Icon name={name} size={9} />
                            </ViewButton>
                        ))}
                        <ScrollButton aria-label="Scroll left"><Arrow to="left" /></ScrollButton>
                        <HorizontalTrack><Thumb /></HorizontalTrack>
                        <ScrollButton aria-label="Scroll right"><Arrow to="right" /></ScrollButton>
                    </ViewBar>
                </Editor>
                <ScrollColumn>
                    <SplitBox />
                    <ScrollButton aria-label="Scroll up"><Arrow to="up" /></ScrollButton>
                    <VerticalTrack><Thumb $height={63} /></VerticalTrack>
                    <ScrollButton aria-label="Scroll down"><Arrow /></ScrollButton>
                    <BrowseButtons>
                        <ViewButton aria-label="Previous page"><Icon name="prevPage" size={10} /></ViewButton>
                        <ViewButton aria-label="Browse object"><Icon name="ball" size={10} /></ViewButton>
                        <ViewButton aria-label="Next page"><Icon name="nextPage" size={10} /></ViewButton>
                    </BrowseButtons>
                </ScrollColumn>
            </Workspace>

            <StatusBar>
                <StatusGroup $columns="68px 76px 38px">
                    <span>Page&nbsp; 1</span><span>Sec&nbsp; 1</span><span>1/1</span>
                </StatusGroup>
                <StatusGroup $columns="62px 44px 50px">
                    <span>At&nbsp; 2cm</span><span>Ln&nbsp; 1</span><span>Col&nbsp; 1</span>
                </StatusGroup>
                <StatusGroup $flush $dim $columns="23px">REC</StatusGroup>
                <StatusGroup $flush $dim $columns="23px">TRK</StatusGroup>
                <StatusGroup $flush $dim $columns="23px">EXT</StatusGroup>
                <StatusGroup $flush $dim $columns="23px">OVR</StatusGroup>
                <StatusGroup $flush $columns="60px">English (U.S</StatusGroup>
                <StatusGroup $flush $columns="46px"><Icon name="proof" /></StatusGroup>
                <StatusGroup $flush $columns="36px" />
                <StatusGroup $flush $columns="25px" />
                <StatusGroup $flush $columns="27px" />
            </StatusBar>

            <TaskBar>
                <StartButton><Icon name="windows" />Start</StartButton>
                <QuickLaunch>
                    {launchers.map(name => (
                        <LaunchButton key={name} aria-label={name}><Icon name={name} /></LaunchButton>
                    ))}
                </QuickLaunch>
                <Tasks>
                    <Task><Icon name="firefox" /><span><b>4</b> F..</span><Arrow /></Task>
                    <Task><Icon name="floppy" />Tot...</Task>
                    <Task><Icon name="eye" />AC...</Task>
                    <Task $active><Icon name="word" />Do...</Task>
                </Tasks>
                <Language>EN</Language>
                <Battery>100%</Battery>
                <BatteryTip />
                <Plug><Icon name="plug" /></Plug>
                <Tray>
                    <TrayIcons>
                        {trayIcons.map(name => <Icon key={name} name={name} />)}
                    </TrayIcons>
                    <Clock>22:43</Clock>
                </Tray>
            </TaskBar>
        </Window>
    </>
)

export default App
